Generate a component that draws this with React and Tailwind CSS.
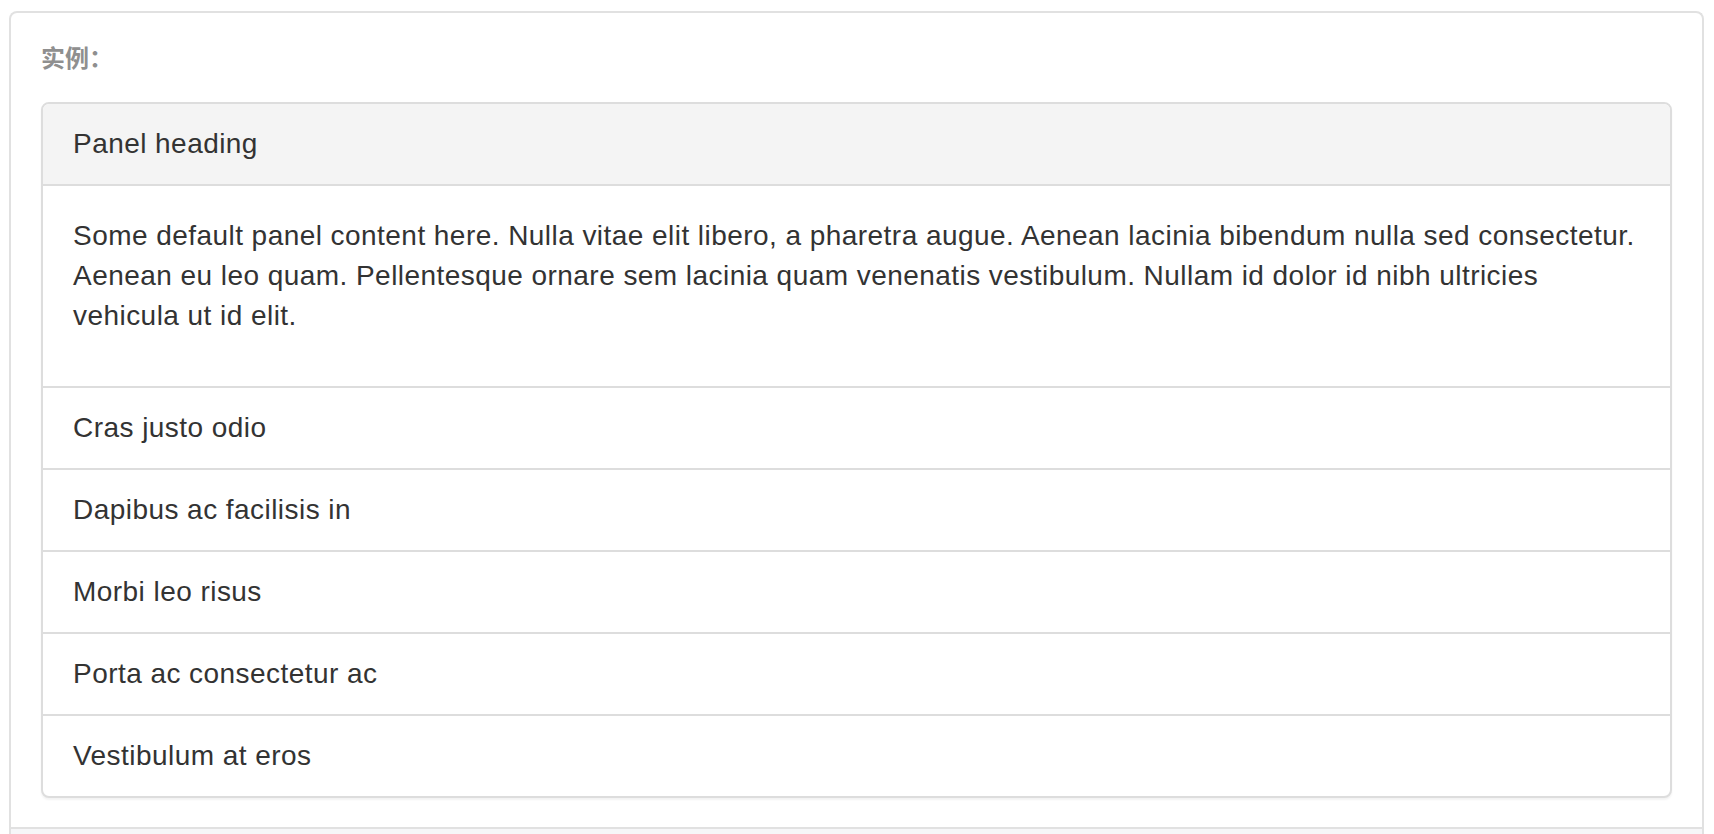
import React from "react";

const items = [
  "Cras justo odio",
  "Dapibus ac facilisis in",
  "Morbi leo risus",
  "Porta ac consectetur ac",
  "Vestibulum at eros",
];

export default function App() {
  return (
    <div
      className="h-[834px] overflow-hidden bg-white pl-[9px] pr-[10px] pt-[11px] text-[#333]"
      style={{ fontFamily: '"Liberation Sans", "Noto Sans CJK SC", Arial, sans-serif' }}
    >
      <div className="rounded-t-[8px] border-x-2 border-t-2 border-[#e1e1e1]">
        <div className="px-[30px] pb-[29px] pt-[30px]">
          <div className="mb-[27px] text-[24px] font-bold leading-[32px] text-[#8f8f8f]">实例：</div>
          <div className="overflow-hidden rounded-[8px] border-2 border-[#dddddd] bg-white text-[28px] leading-[40px] tracking-[0.45px] shadow-[0_2px_2px_rgba(0,0,0,0.05)]">
            <div className="border-b-2 border-[#dddddd] bg-[#f4f4f4] px-[30px] py-[20px]">
              Panel heading
            </div>
            <div className="p-[30px]">
              <p className="mb-[20px]">
                <span className="block whitespace-nowrap">
                  Some default panel content here. Nulla vitae elit libero, a pharetra augue. Aenean lacinia bibendum nulla sed consectetur.
                </span>
                <span className="block whitespace-nowrap">
                  Aenean eu leo quam. Pellentesque ornare sem lacinia quam venenatis vestibulum. Nullam id dolor id nibh ultricies
                </span>
                <span className="block whitespace-nowrap">vehicula ut id elit.</span>
              </p>
            </div>
            <ul>
              {items.map((t) => (
                <li key={t} className="border-t-2 border-[#dddddd] px-[30px] py-[20px]">
                  {t}
                </li>
              ))}
            </ul>
          </div>
        </div>
        <div className="h-[60px] border-t-2 border-[#e1e1e1] bg-[#f6f6f8]"></div>
      </div>
    </div>
  );
}
